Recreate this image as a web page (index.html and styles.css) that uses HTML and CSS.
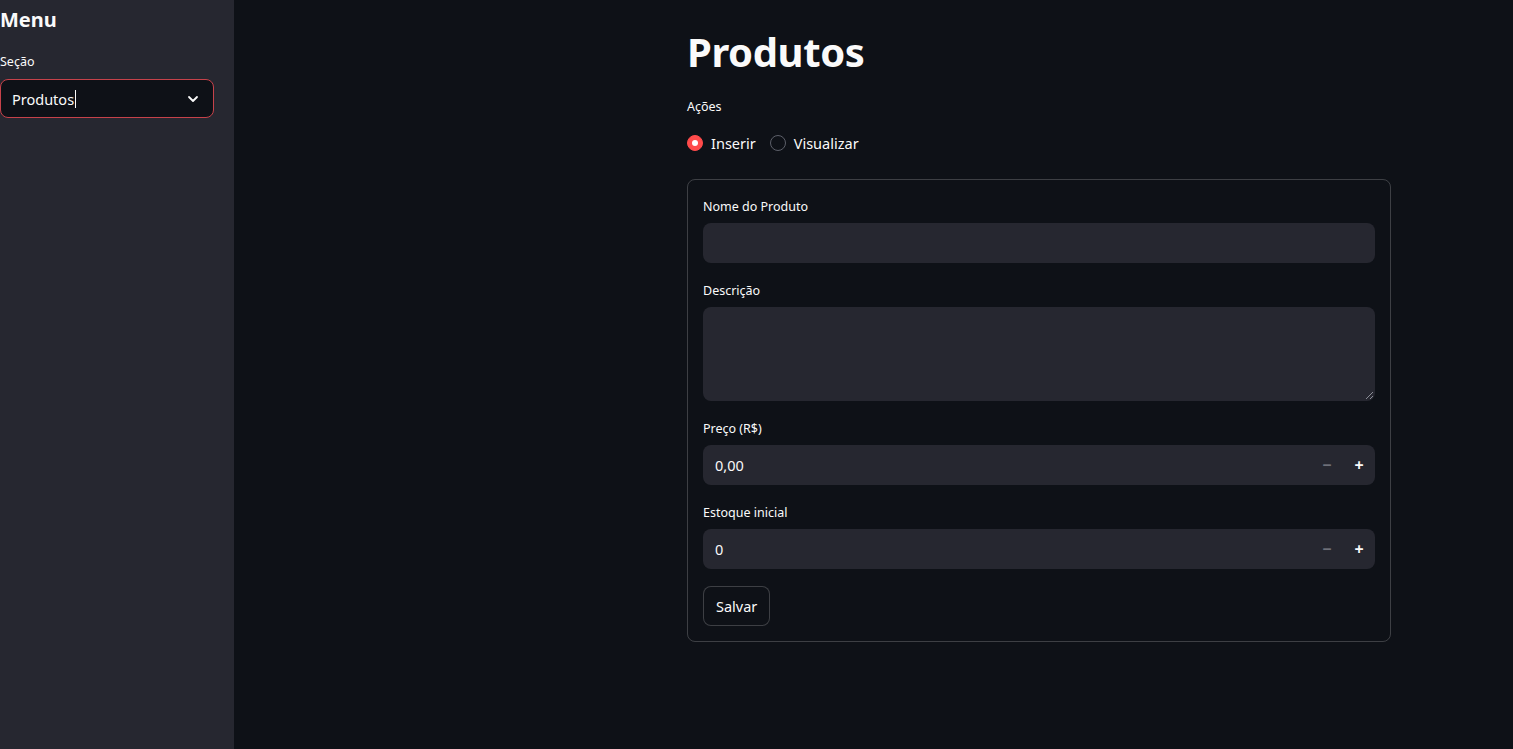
FILE: index.html
```html
<!DOCTYPE html>
<html lang="pt">
<head>
<meta charset="utf-8">
<link rel="stylesheet" href="styles.css">
</head>
<body>
<div class="app">
  <aside class="sidebar">
    <h2 class="side-title">Menu</h2>
    <label class="label">Seção</label>
    <div class="select">
      <span class="select-value">Produtos<span class="caret"></span></span>
      <svg class="chev" width="16" height="16" viewBox="0 0 16 16"><path d="M4 6l4 4 4-4" fill="none" stroke="#fafafa" stroke-width="1.8" stroke-linecap="round" stroke-linejoin="round"/></svg>
    </div>
  </aside>
  <main class="main">
    <div class="block">
      <h1 class="title">Produtos</h1>
      <div class="label">Ações</div>
      <div class="radios">
        <div class="radio"><span class="dot on"></span>Inserir</div>
        <div class="radio"><span class="dot"></span>Visualizar</div>
      </div>
      <form class="form">
        <div class="field">
          <div class="label">Nome do Produto</div>
          <div class="input"></div>
        </div>
        <div class="field">
          <div class="label">Descrição</div>
          <div class="input textarea">
            <svg class="grip" width="10" height="10" viewBox="0 0 10 10"><path d="M9 2L2 9M9 6L6 9" stroke="#8a8c95" stroke-width="1"/></svg>
          </div>
        </div>
        <div class="field">
          <div class="label">Preço (R$)</div>
          <div class="input number"><span class="val">0,00</span><span class="steps"><span class="minus">−</span><span class="plus">+</span></span></div>
        </div>
        <div class="field">
          <div class="label">Estoque inicial</div>
          <div class="input number"><span class="val">0</span><span class="steps"><span class="minus">−</span><span class="plus">+</span></span></div>
        </div>
        <div><button type="button" class="btn">Salvar</button></div>
      </form>
    </div>
  </main>
</div>
</body>
</html>
```
FILE: styles.css
```css
* { box-sizing: border-box; }
html, body { margin: 0; height: 100%; }
body {
  font-family: "Noto Sans", "Open Sans", sans-serif;
  color: #fafafa;
  background: #0e1117;
}
.app { display: flex; height: 749px; overflow: hidden; }
.sidebar {
  width: 234px;
  background: #262730;
  padding: 5px 20px 0 0;
  flex: none;
}
.side-title {
  margin: 0 0 18px;
  font-size: 20px;
  font-weight: 700;
  line-height: 30px;
}
.label {
  font-size: 12.5px;
  line-height: 18px;
  color: #fafafa;
  display: block;
}
.sidebar .label { margin-bottom: 8px; }
.select {
  height: 39px;
  border: 1px solid #c6424a;
  border-radius: 8px;
  background: #0e1117;
  display: flex;
  align-items: center;
  justify-content: space-between;
  padding: 0 12px 0 11px;
}
.select-value { font-size: 14.5px; display: flex; align-items: center; }
.caret { display: inline-block; width: 1px; height: 18px; background: #fafafa; margin-left: 1px; }
.main { flex: 1; padding: 0 0 0 453px; }
.block { width: 704px; }
.title {
  margin: 0;
  padding: 28px 0 0;
  font-size: 40px;
  line-height: 48px;
  font-weight: 700;
  letter-spacing: -0.4px;
}
.main .block > .label { margin-top: 22px; }
.radios { display: flex; gap: 14px; margin-top: 17px; }
.radio { display: flex; align-items: center; font-size: 14.5px; line-height: 20px; }
.dot {
  width: 16px; height: 16px; border-radius: 50%;
  border: 1px solid #5c5f69;
  margin-right: 8px;
  display: inline-block;
}
.dot.on { background: #ff4b4b; border-color: #ff4b4b; position: relative; }
.dot.on::after {
  content: ""; position: absolute; left: 4px; top: 4px;
  width: 6px; height: 6px; border-radius: 50%; background: #fff;
}
.form {
  margin-top: 26px;
  border: 1px solid rgba(250,250,250,0.2);
  border-radius: 8px;
  padding: 16px 15px 15px;
  display: flex;
  flex-direction: column;
  gap: 17px;
  width: 704px;
}
.field .label { margin-top: 2px; margin-bottom: 7px; }
.input {
  height: 40px;
  background: #262730;
  border-radius: 8px;
  position: relative;
}
.textarea { height: 94px; }
.grip { position: absolute; right: 1px; bottom: 1px; }
.number { display: flex; align-items: center; justify-content: space-between; padding: 0 0 0 12px; }
.val { font-size: 14.5px; }
.steps { display: flex; height: 100%; }
.steps span { width: 32px; display: flex; align-items: center; justify-content: center; font-size: 16px; font-weight: 700; }
.minus { color: #6e7079; }
.plus { color: #fafafa; }
.btn {
  font-family: inherit;
  font-size: 14.5px;
  color: #fafafa;
  background: #0e1117;
  border: 1px solid rgba(250,250,250,0.2);
  border-radius: 8px;
  height: 40px;
  padding: 0 12px;
}
```
